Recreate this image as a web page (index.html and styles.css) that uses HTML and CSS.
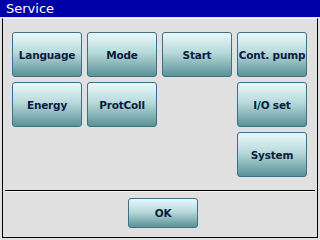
FILE: index.html
```html
<!DOCTYPE html>
<html lang="en">
<head>
    <meta charset="UTF-8">
    <title>Service</title>
    <link rel="stylesheet" href="styles.css">
</head>
<body>
    <div class="titlebar">Service</div>
    <div class="panel">
        <div class="grid">
            <button class="btn">Language</button>
            <button class="btn">Mode</button>
            <button class="btn">Start</button>
            <button class="btn">Cont. pump</button>
            <button class="btn">Energy</button>
            <button class="btn">ProtColl</button>
            <button class="btn col4">I/O set</button>
            <button class="btn col4">System</button>
        </div>
        <div class="sep"></div>
        <div class="footer">
            <button class="btn ok">OK</button>
        </div>
    </div>
</body>
</html>
```

FILE: styles.css
```css
body {
    margin: 0;
    width: 320px;
    height: 240px;
    background-color: #e0e0e0;
    font-family: "DejaVu Sans", sans-serif;
    overflow: hidden;
}

.titlebar {
    height: 17px;
    line-height: 18px;
    background-color: #0000a8;
    color: #fff;
    font-size: 13px;
    padding-left: 6px;
}

.panel {
    margin: 1px 2px 0 2px;
    height: 218px;
    border: 1px solid #000;
    border-top-color: #f4f4f4;
    box-sizing: content-box;
}

.grid {
    display: grid;
    grid-template-columns: repeat(4, 70px);
    grid-auto-rows: 45px;
    gap: 5px;
    padding: 13px 0 0 9px;
}

.col4 {
    grid-column: 4;
}

.btn {
    margin: 0;
    padding: 0;
    border: 1px solid #3d6f86;
    border-radius: 3px;
    background: linear-gradient(to bottom, #e8f8fa 0%, #b8dadc 45%, #5a9296 100%);
    color: #0b1b3e;
    font-family: "DejaVu Sans", sans-serif;
    font-weight: bold;
    font-size: 10.5px;
    letter-spacing: -0.2px;
    box-shadow: 0 0 1px #c8e4ee;
}

.sep {
    margin: 13px 2px 0 2px;
    height: 1px;
    background-color: #000;
    border-bottom: 1px solid #f4f4f4;
}

.footer {
    padding: 6px 0 0 125px;
}

.ok {
    width: 70px;
    height: 30px;
}
```
